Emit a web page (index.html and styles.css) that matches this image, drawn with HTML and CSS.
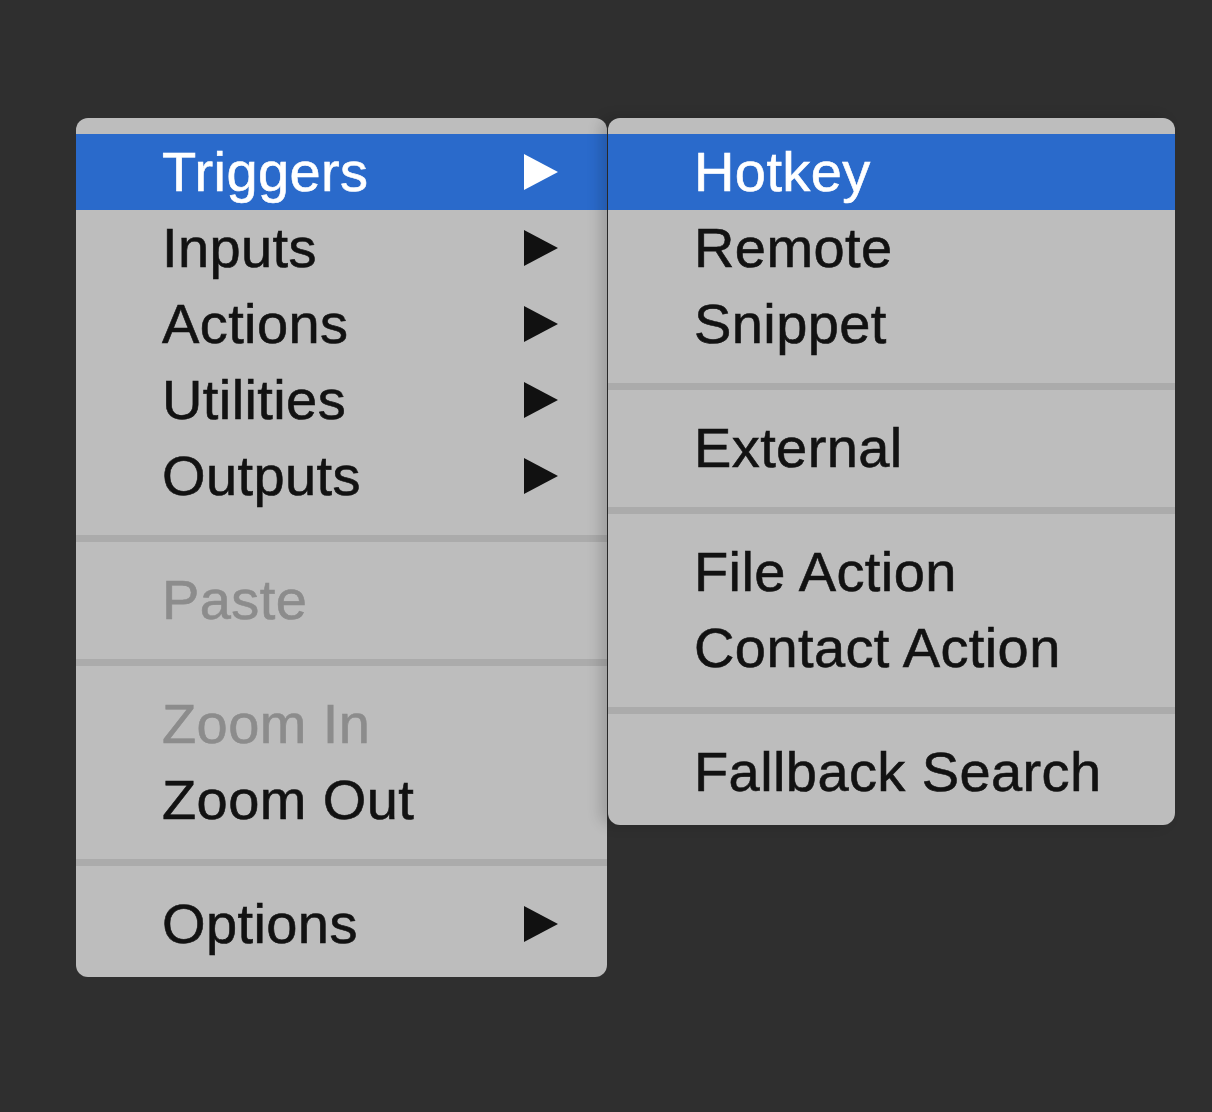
FILE: index.html
```html
<!DOCTYPE html>
<html lang="en">
<head>
<meta charset="utf-8">
<title>Menu</title>
<link rel="stylesheet" href="styles.css">
</head>
<body>
<div class="stage">
  <div class="menu menu-main">
    <div class="item active"><span class="label">Triggers</span><svg class="arrow" viewBox="0 0 34 36"><polygon points="0,0 34,18 0,36"/></svg></div>
    <div class="item"><span class="label">Inputs</span><svg class="arrow" viewBox="0 0 34 36"><polygon points="0,0 34,18 0,36"/></svg></div>
    <div class="item"><span class="label">Actions</span><svg class="arrow" viewBox="0 0 34 36"><polygon points="0,0 34,18 0,36"/></svg></div>
    <div class="item"><span class="label">Utilities</span><svg class="arrow" viewBox="0 0 34 36"><polygon points="0,0 34,18 0,36"/></svg></div>
    <div class="item"><span class="label">Outputs</span><svg class="arrow" viewBox="0 0 34 36"><polygon points="0,0 34,18 0,36"/></svg></div>
    <div class="sep"></div>
    <div class="item disabled"><span class="label">Paste</span></div>
    <div class="sep"></div>
    <div class="item disabled"><span class="label">Zoom In</span></div>
    <div class="item"><span class="label">Zoom Out</span></div>
    <div class="sep"></div>
    <div class="item"><span class="label">Options</span><svg class="arrow" viewBox="0 0 34 36"><polygon points="0,0 34,18 0,36"/></svg></div>
  </div>
  <div class="menu menu-sub">
    <div class="item active"><span class="label">Hotkey</span></div>
    <div class="item"><span class="label">Remote</span></div>
    <div class="item"><span class="label">Snippet</span></div>
    <div class="sep"></div>
    <div class="item"><span class="label">External</span></div>
    <div class="sep"></div>
    <div class="item"><span class="label">File Action</span></div>
    <div class="item"><span class="label">Contact Action</span></div>
    <div class="sep"></div>
    <div class="item"><span class="label">Fallback Search</span></div>
  </div>
</div>
</body>
</html>
```

FILE: styles.css
```css
html, body {
  margin: 0;
  padding: 0;
  background: #2f2f2f;
}

body {
  width: 1212px;
  height: 1112px;
  overflow: hidden;
  font-family: "Liberation Sans", Arial, sans-serif;
}

.stage {
  display: flex;
  align-items: flex-start;
  gap: 1px;
  padding: 118px 0 0 76px;
}

.menu {
  background: #bdbdbd;
  border-radius: 12px;
  padding: 16px 0 15px;
  position: relative;
}

.menu-main {
  width: 531px;
}

.menu-sub {
  width: 567px;
  box-shadow: -8px 0 14px rgba(0, 0, 0, 0.16);
}

.item {
  display: flex;
  align-items: center;
  justify-content: space-between;
  height: 76px;
  padding: 0 49px 0 86px;
  font-size: 56px;
  line-height: 76px;
  letter-spacing: 0.4px;
  color: #121212;
  -webkit-text-stroke: 0.6px currentColor;
}

.item .label {
  white-space: nowrap;
}

.item.active {
  background: #2a6acb;
  color: #ffffff;
}

.item.disabled {
  color: #8c8c8c;
}

.arrow {
  width: 34px;
  height: 36px;
  fill: #111111;
  flex: none;
}

.item.active .arrow {
  fill: #ffffff;
}

.sep {
  height: 48px;
  display: flex;
  align-items: center;
}

.sep::before {
  content: "";
  display: block;
  width: 100%;
  height: 7px;
  background: #ababab;
}
```
